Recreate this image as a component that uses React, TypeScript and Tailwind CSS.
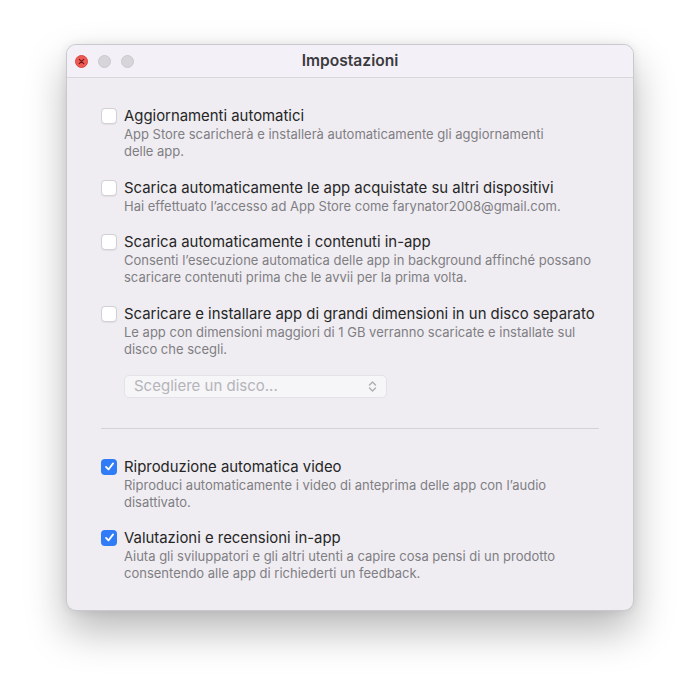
import React from "react";

type Setting = {
  title: string;
  lines: string[];
  checked: boolean;
};

const topSettings: Setting[] = [
  {
    title: "Aggiornamenti automatici",
    lines: [
      "App Store scaricherà e installerà automaticamente gli aggiornamenti",
      "delle app.",
    ],
    checked: false,
  },
  {
    title: "Scarica automaticamente le app acquistate su altri dispositivi",
    lines: ["Hai effettuato l’accesso ad App Store come farynator2008@gmail.com."],
    checked: false,
  },
  {
    title: "Scarica automaticamente i contenuti in-app",
    lines: [
      "Consenti l’esecuzione automatica delle app in background affinché possano",
      "scaricare contenuti prima che le avvii per la prima volta.",
    ],
    checked: false,
  },
  {
    title: "Scaricare e installare app di grandi dimensioni in un disco separato",
    lines: [
      "Le app con dimensioni maggiori di 1 GB verranno scaricate e installate sul",
      "disco che scegli.",
    ],
    checked: false,
  },
];

const bottomSettings: Setting[] = [
  {
    title: "Riproduzione automatica video",
    lines: [
      "Riproduci automaticamente i video di anteprima delle app con l’audio",
      "disattivato.",
    ],
    checked: true,
  },
  {
    title: "Valutazioni e recensioni in-app",
    lines: [
      "Aiuta gli sviluppatori e gli altri utenti a capire cosa pensi di un prodotto",
      "consentendo alle app di richiederti un feedback.",
    ],
    checked: true,
  },
];

const Checkbox = ({ checked }: { checked: boolean }) =>
  checked ? (
    <div className="w-[16px] h-[16px] rounded-[4px] bg-[#2f7cf6] flex items-center justify-center shrink-0">
      <svg width="11" height="11" viewBox="0 0 12 12" fill="none">
        <path
          d="M2.2 6.4 L4.9 9.2 L9.9 2.6"
          stroke="white"
          strokeWidth="2"
          strokeLinecap="round"
          strokeLinejoin="round"
        />
      </svg>
    </div>
  ) : (
    <div className="w-[16px] h-[16px] rounded-[4px] bg-white border border-[#d2d0d6] shrink-0 shadow-[0_0.5px_1px_rgba(0,0,0,0.06)]" />
  );

const SettingRow = ({ setting }: { setting: Setting }) => (
  <div className="flex gap-[7px]">
    <div className="pt-[2px]">
      <Checkbox checked={setting.checked} />
    </div>
    <div>
      <div className="text-[14.9px] leading-[20px] text-[#262626]">
        {setting.title}
      </div>
      <div className="text-[13px] leading-[17px] text-[#7f7e83]">
        {setting.lines.map((l, i) => (
          <div key={i}>{l}</div>
        ))}
      </div>
    </div>
  </div>
);

export default function App() {
  return (
    <div
      className="w-[700px] h-[697px] bg-white pt-[44px] pl-[66px]"
      style={{ fontFamily: "Inter, 'Noto Sans', sans-serif" }}
    >
      <div className="w-[568px] h-[567px] rounded-[10px] bg-[#efedf2] border border-[#c9c8cc] shadow-[0_20px_40px_rgba(0,0,0,0.28),0_0_10px_rgba(0,0,0,0.08)] overflow-hidden flex flex-col">
        <div className="h-[33px] bg-[#f3f0f8] border-b border-[#d9d7dc] flex items-center relative shrink-0">
          <div className="flex gap-[10px] pl-[8px]">
            <div className="w-[13px] h-[13px] rounded-full bg-[#ee5b55] border border-[#d9463f] flex items-center justify-center">
              <svg width="7" height="7" viewBox="0 0 8 8">
                <path
                  d="M1.5 1.5 L6.5 6.5 M6.5 1.5 L1.5 6.5"
                  stroke="#6b1310"
                  strokeWidth="1.3"
                  strokeLinecap="round"
                />
              </svg>
            </div>
            <div className="w-[13px] h-[13px] rounded-full bg-[#d7d5da] border border-[#cbc9ce]" />
            <div className="w-[13px] h-[13px] rounded-full bg-[#d7d5da] border border-[#cbc9ce]" />
          </div>
          <div className="absolute inset-0 flex items-center justify-center text-[15.6px] font-semibold text-[#3b3b3d]">
            Impostazioni
          </div>
        </div>

        <div className="pl-[34px] pr-[34px] pt-[28px]">
          <div className="flex flex-col gap-[17.5px]">
            {topSettings.map((s) => (
              <SettingRow key={s.title} setting={s} />
            ))}
          </div>
          <div className="pl-[23px] pt-[17px]">
            <div className="w-[263px] h-[23px] rounded-[5px] bg-[#f6f5f8] border border-[#e4e2e7] flex items-center justify-between px-[9px]">
              <span className="text-[15px] text-[#b5b4b9]">Scegliere un disco...</span>
              <svg width="9" height="13" viewBox="0 0 9 13" fill="none">
                <path
                  d="M1.5 5 L4.5 2 L7.5 5 M1.5 8 L4.5 11 L7.5 8"
                  stroke="#aeadb2"
                  strokeWidth="1.4"
                  strokeLinecap="round"
                  strokeLinejoin="round"
                />
              </svg>
            </div>
          </div>
          <div className="h-px bg-[#d3d1d6] mt-[30px] mb-[28px]" />
          <div className="flex flex-col gap-[17px]">
            {bottomSettings.map((s) => (
              <SettingRow key={s.title} setting={s} />
            ))}
          </div>
        </div>
      </div>
    </div>
  );
}
